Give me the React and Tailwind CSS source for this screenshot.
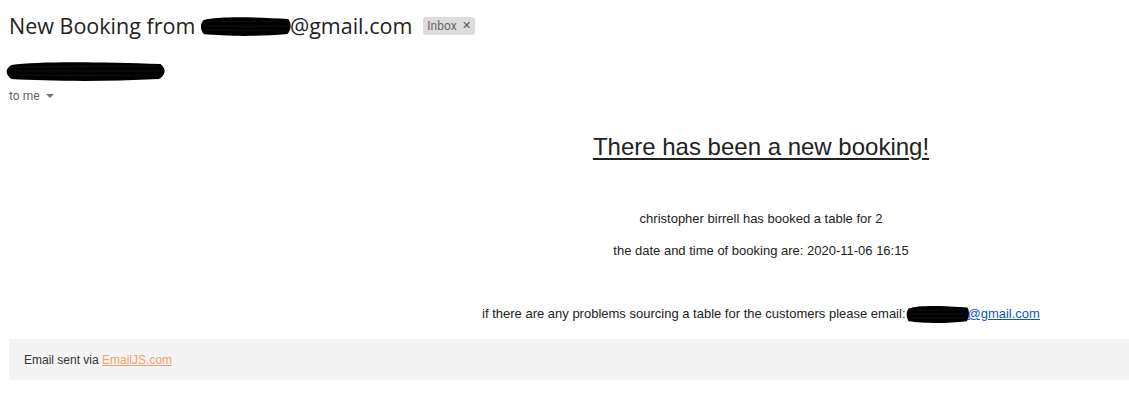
import React from 'react';

const Scribble = ({ className }) => (
  <svg className={className} viewBox="0 0 100 24" preserveAspectRatio="none">
    <path d="M4 6 C20 2 60 3 96 5 C100 10 99 16 95 20 C60 23 25 22 4 20 C0 15 0 10 4 6 Z" fill="#000" />
    <path d="M6 8 L94 7 M5 12 L96 12 M6 16 L95 17" stroke="#111" strokeWidth="1" />
  </svg>
);

const App = () => {
  return (
    <div className="bg-white w-[1129px] h-[407px] overflow-hidden font-['Liberation_Sans',Arial,sans-serif] text-[#222]">
      {/* Subject */}
      <div className="flex items-center pl-[9px] pt-[11px] h-[30px] box-content">
        <h1 className="font-['Open_Sans',Roboto,sans-serif] text-[21.5px] text-[#222] flex items-center whitespace-nowrap">
          New Booking from&nbsp;
          <Scribble className="w-[92px] h-[24px] -ml-[1px]" />
          <span className="-ml-[2px]">@gmail.com</span>
        </h1>
        <span className="ml-[11px] bg-[#ddd] text-[#666] rounded-[3px] px-[4px] h-[18px] flex items-center text-[12px] font-['Roboto',sans-serif] gap-[5px]">
          Inbox <span className="text-[11px] text-[#555]">✕</span>
        </span>
      </div>

      {/* Sender */}
      <div className="pl-[5px] mt-[18px] h-[26px]">
        <Scribble className="w-[162px] h-[24px]" />
      </div>
      <div className="pl-[9px] mt-[3px] flex items-center gap-[6px] text-[12px] text-[#5f6368] font-['Roboto',sans-serif] h-[16px]">
        to me
        <span className="w-0 h-0 border-l-[4px] border-r-[4px] border-t-[4px] border-l-transparent border-r-transparent border-t-[#777]" />
      </div>

      {/* Body */}
      <div className="flex pl-[9px]">
        <div className="w-[384px] shrink-0" />
        <div className="flex-1 text-center">
          <h2 className="text-[24px] underline underline-offset-[3px] decoration-[1.5px] mt-[29px] leading-[28px]">
            There has been a new booking!
          </h2>
          <p className="text-[13px] mt-[50px] leading-[16px]">christopher birrell has booked a table for 2</p>
          <p className="text-[13px] mt-[16px] leading-[16px]">the date and time of booking are: 2020-11-06 16:15</p>
          <p className="text-[13px] mt-[44px] leading-[16px] flex items-center justify-center">
            if there are any problems sourcing a table for the customers please email:
            <Scribble className="w-[64px] h-[22px] -mr-[2px]" />
            <a href="#" className="text-[#1155cc] underline">@gmail.com</a>
          </p>
        </div>
      </div>

      {/* Footer */}
      <div className="ml-[9px] mt-[14px] bg-[#f4f4f4] h-[41px] flex items-center pl-[15px] text-[12px] text-[#333]">
        Email sent via&nbsp;<a href="#" className="text-[#f5a06a] underline">EmailJS.com</a>
      </div>
    </div>
  );
};

export default App;
